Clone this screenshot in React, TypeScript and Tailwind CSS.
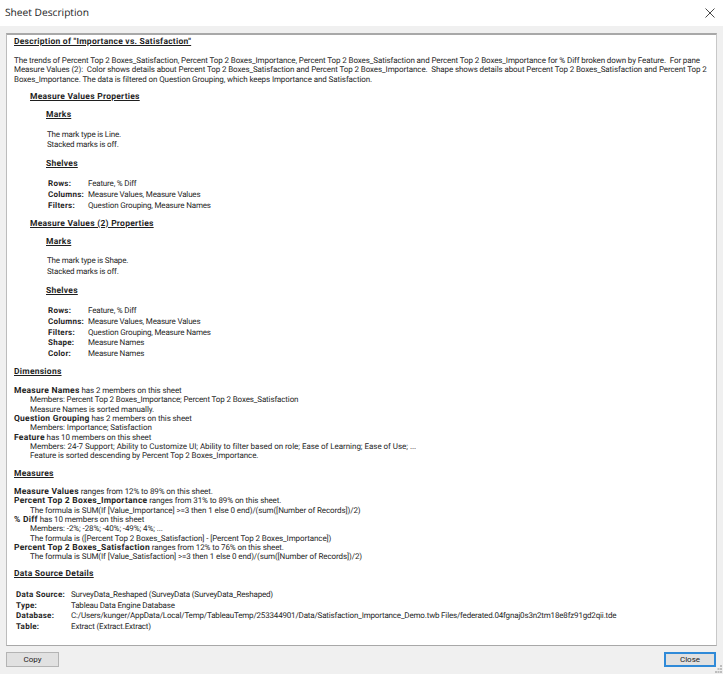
import { ReactNode } from 'react';

const boldClass = 'font-bold text-[8.5px] tracking-[0.25px]';

function B({ children }: { children: ReactNode }) {
  return <b className={boldClass}>{children}</b>;
}

function Heading({ children, className = '' }: { children: ReactNode; className?: string }) {
  return <div className={`h-[9.35px] underline whitespace-pre ${boldClass} ${className}`}>{children}</div>;
}

function Line({ children, className = 'tracking-[-0.1px]' }: { children: ReactNode; className?: string }) {
  return <div className={`h-[9.35px] whitespace-pre ${className}`}>{children}</div>;
}

function Shelf({ rows, labelWidth = 'w-10' }: { rows: string[][]; labelWidth?: string }) {
  return (
    <div className="flex flex-col">
      {rows.map(([label, value]) => (
        <div key={label} className="flex h-[10.75px] items-center whitespace-pre">
          <span className={`font-bold text-[8px] tracking-[0.25px] ${labelWidth}`}>{label}</span>
          <span>{value}</span>
        </div>
      ))}
    </div>
  );
}

function Props({ title, mark, rows }: { title: string; mark: string; rows: string[][] }) {
  return (
    <div className="ml-4 flex flex-col">
      <Heading>{title}</Heading>
      <div className="ml-4 flex flex-col">
        <Heading className="mt-[8.7px]">Marks</Heading>
        <div className="mt-[9.5px] ml-px flex flex-col">
          <div className="h-[10.75px] whitespace-pre">The mark type is {mark}.</div>
          <div className="h-[10.75px] whitespace-pre">Stacked marks is off.</div>
        </div>
        <Heading className="mt-[8.7px]">Shelves</Heading>
        <div className="mt-[9.5px] ml-0.5">
          <Shelf rows={rows} />
        </div>
      </div>
    </div>
  );
}

function Grip() {
  return (
    <svg width="8" height="9" viewBox="0 0 8 9" className="absolute right-0 bottom-0 fill-[#bdbdbd]">
      <rect x="5" y="0" width="2" height="2" />
      <rect x="2.5" y="3" width="2" height="2" />
      <rect x="5" y="3" width="2" height="2" />
      <rect x="0" y="6" width="2" height="2" />
      <rect x="2.5" y="6" width="2" height="2" />
      <rect x="5" y="6" width="2" height="2" />
    </svg>
  );
}

export default function App() {
  return (
    <div className="relative w-[723px] h-[674px] flex flex-col bg-[#f0f0f0] overflow-hidden font-['Roboto',sans-serif] text-[#1f1f1f] [text-rendering:geometricPrecision]">
      <div className="h-[26px] bg-white flex items-center justify-between pl-[5px] pr-2 shrink-0">
        <span className="text-[10.2px] text-[#222] font-['Open_Sans',sans-serif]">Sheet Description</span>
        <svg width="10" height="10" viewBox="0 0 10 10" className="stroke-[#333]" fill="none" strokeWidth="0.9">
          <path d="M0.5 0.5L9.5 9.5M9.5 0.5L0.5 9.5" />
        </svg>
      </div>

      <div className="mt-[7px] mx-[6px] h-[613px] shrink-0 bg-white border border-[#a8a8a8] border-t-2 border-l-[#bcbcbc] border-r-[#c8c8c8] pl-[7px] pt-[3px] text-[8px] tracking-[-0.17px] leading-[9.35px]">
        <Heading>Description of "Importance vs. Satisfaction"</Heading>
        <div className="mt-[8.7px]">
          <Line>The trends of Percent Top 2 Boxes_Satisfaction, Percent Top 2 Boxes_Importance, Percent Top 2 Boxes_Satisfaction and Percent Top 2 Boxes_Importance for % Diff broken down by Feature.  For pane</Line>
          <Line>Measure Values (2):  Color shows details about Percent Top 2 Boxes_Satisfaction and Percent Top 2 Boxes_Importance.  Shape shows details about Percent Top 2 Boxes_Satisfaction and Percent Top 2</Line>
          <Line>Boxes_Importance. The data is filtered on Question Grouping, which keeps Importance and Satisfaction.</Line>
        </div>

        <div className="mt-[8.7px]">
          <Props
            title="Measure Values Properties"
            mark="Line"
            rows={[
              ['Rows:', 'Feature, % Diff'],
              ['Columns:', 'Measure Values, Measure Values'],
              ['Filters:', 'Question Grouping, Measure Names'],
            ]}
          />
        </div>
        <div className="mt-[8.7px]">
          <Props
            title="Measure Values (2) Properties"
            mark="Shape"
            rows={[
              ['Rows:', 'Feature, % Diff'],
              ['Columns:', 'Measure Values, Measure Values'],
              ['Filters:', 'Question Grouping, Measure Names'],
              ['Shape:', 'Measure Names'],
              ['Color:', 'Measure Names'],
            ]}
          />
        </div>

        <Heading className="mt-[8.7px]">Dimensions</Heading>
        <div className="mt-[8.7px]">
          <Line><B>Measure Names</B> has 2 members on this sheet</Line>
          <Line className="ml-4 tracking-[-0.13px]">Members: Percent Top 2 Boxes_Importance; Percent Top 2 Boxes_Satisfaction</Line>
          <Line className="ml-4 tracking-[-0.1px]">Measure Names is sorted manually.</Line>
          <Line><B>Question Grouping</B> has 2 members on this sheet</Line>
          <Line className="ml-4 tracking-[-0.1px]">Members: Importance; Satisfaction</Line>
          <Line><B>Feature</B> has 10 members on this sheet</Line>
          <Line className="ml-4 tracking-[-0.03px]">Members: 24-7 Support; Ability to Customize UI; Ability to filter based on role; Ease of Learning; Ease of Use; ...</Line>
          <Line className="ml-4 tracking-[-0.1px]">Feature is sorted descending by Percent Top 2 Boxes_Importance.</Line>
        </div>

        <Heading className="mt-[8.7px] pt-px">Measures</Heading>
        <div className="mt-[8.2px]">
          <Line><B>Measure Values</B> ranges from 12% to 89% on this sheet.</Line>
          <Line><B>Percent Top 2 Boxes_Importance</B> ranges from 31% to 89% on this sheet.</Line>
          <Line className="ml-4 tracking-[-0.1px]">The formula is SUM(If [Value_Importance] &gt;=3 then 1 else 0 end)/(sum([Number of Records])/2)</Line>
          <Line><B>% Diff</B> has 10 members on this sheet</Line>
          <Line className="ml-4 tracking-[-0.1px]">Members: -2%; -28%; -40%; -49%; 4%; ...</Line>
          <Line className="ml-4 tracking-[-0.1px]">The formula is ([Percent Top 2 Boxes_Satisfaction] - [Percent Top 2 Boxes_Importance])</Line>
          <Line><B>Percent Top 2 Boxes_Satisfaction</B> ranges from 12% to 76% on this sheet.</Line>
          <Line className="ml-4 tracking-[-0.1px]">The formula is SUM(If [Value_Satisfaction] &gt;=3 then 1 else 0 end)/(sum([Number of Records])/2)</Line>
        </div>

        <Heading className="mt-[8.7px]">Data Source Details</Heading>
        <div className="mt-[9.5px] ml-0.5">
          <Shelf
            labelWidth="w-[55px]"
            rows={[
              ['Data Source:', 'SurveyData_Reshaped (SurveyData (SurveyData_Reshaped)'],
              ['Type:', 'Tableau Data Engine Database'],
              ['Database:', 'C:/Users/kunger/AppData/Local/Temp/TableauTemp/253344901/Data/Satisfaction_Importance_Demo.twb Files/federated.04fgnaj0s3n2tm18e8fz91gd2qii.tde'],
              ['Table:', 'Extract (Extract.Extract)'],
            ]}
          />
        </div>
      </div>

      <div className="mt-[6px] mx-[6px] flex justify-between text-[8px] text-[#222]">
        <button className="w-[53px] h-[15px] bg-[#e1e1e1] border border-[#b4b4b4] flex items-center justify-center">Copy</button>
        <button className="w-[52px] h-[15px] mr-px bg-[#e1e1e1] border-2 border-[#2f8ad8] flex items-center justify-center">Close</button>
      </div>
      <Grip />
    </div>
  );
}
